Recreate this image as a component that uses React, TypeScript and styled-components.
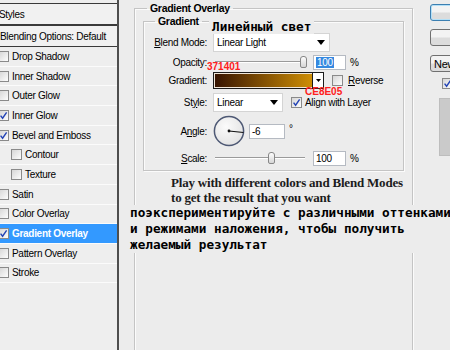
import styled, { createGlobalStyle, css } from "styled-components";

const GlobalStyle = createGlobalStyle`
  html, body {
    margin: 0;
    padding: 0;
    background: #ececec;
    overflow: hidden;
  }
  body {
    font-family: "Liberation Sans", Arial, sans-serif;
    font-size: 10px;
    letter-spacing: -0.3px;
    color: #000;
  }
`;

type StyleItem = {
  label: string;
  checked?: boolean;
  nested?: boolean;
  active?: boolean;
};

const STYLES: StyleItem[] = [
  { label: "Drop Shadow" },
  { label: "Inner Shadow" },
  { label: "Outer Glow" },
  { label: "Inner Glow", checked: true },
  { label: "Bevel and Emboss", checked: true },
  { label: "Contour", nested: true },
  { label: "Texture", nested: true },
  { label: "Satin" },
  { label: "Color Overlay" },
  { label: "Gradient Overlay", checked: true, active: true },
  { label: "Pattern Overlay" },
  { label: "Stroke" },
];

const NOTES = [
  { text: "Линейный свет", x: 209, y: 19, kind: "ru" as const },
  { text: "371401", x: 207, y: 61, kind: "hex" as const },
  { text: "CE8E05", x: 305, y: 86, kind: "hex" as const },
];

export default function App() {
  return (
    <>
      <GlobalStyle />
      <Dialog>
        <StylesPanel>
          <HeaderCell $top={3}>
            <span style={{ marginLeft: -1 }}>Styles</span>
          </HeaderCell>
          <HeaderCell>Blending Options: Default</HeaderCell>
          {STYLES.map((s) => (
            <StyleRow key={s.label} $active={s.active} $nested={s.nested}>
              <CheckBox checked={s.checked} ml={s.nested ? 0 : -2} />
              <span>{s.label}</span>
            </StyleRow>
          ))}
        </StylesPanel>

        <Workspace>
          <Group $pad={8} $h={400}>
            <Caption $ml={4}>Gradient Overlay</Caption>
            <Group $pad={6} $bottom={2}>
              <Caption $ml={5}>Gradient</Caption>
              <Form>
                <Field $h={21}>
                  <FieldLabel>
                    <u>B</u>lend Mode:
                  </FieldLabel>
                  <Select $w={117}>
                    <span>Linear Light</span>
                    <Caret />
                  </Select>
                </Field>
                <Field $h={18}>
                  <FieldLabel>Opacity:</FieldLabel>
                  <Slider>
                    <Thumb $at={87} />
                  </Slider>
                  <NumberBox $w={33} $ml={5}>
                    <Selected>100</Selected>
                  </NumberBox>
                  <Unit>%</Unit>
                </Field>
                <Field $h={19}>
                  <FieldLabel>Gradient:</FieldLabel>
                  <GradientPicker>
                    <Ramp />
                    <RampArrow>
                      <svg width="5" height="3" viewBox="0 0 5 3">
                        <path d="M0 0h5L2.5 3z" fill="#000" />
                      </svg>
                    </RampArrow>
                  </GradientPicker>
                  <CheckItem $ml={8} $gap={5}>
                    <CheckBox />
                    <span>
                      <u>R</u>everse
                    </span>
                  </CheckItem>
                </Field>
                <Field $h={24}>
                  <FieldLabel>
                    St<u>y</u>le:
                  </FieldLabel>
                  <Select $w={70}>
                    <span>Linear</span>
                    <Caret />
                  </Select>
                  <CheckItem $ml={8} $gap={3}>
                    <CheckBox checked />
                    <span>Align with Layer</span>
                  </CheckItem>
                </Field>
                <Field $h={34}>
                  <FieldLabel>
                    A<u>n</u>gle:
                  </FieldLabel>
                  <Dial />
                  <NumberBox $w={36} $ml={4}>
                    -6
                  </NumberBox>
                  <Unit $raise>°</Unit>
                </Field>
                <Field $h={20}>
                  <FieldLabel>
                    <u>S</u>cale:
                  </FieldLabel>
                  <Slider>
                    <Thumb $at={55} />
                  </Slider>
                  <NumberBox $w={33} $ml={5}>
                    100
                  </NumberBox>
                  <Unit>%</Unit>
                </Field>
              </Form>
            </Group>
            <Hint>
              Play with different colors and Blend Modes
              <br />
              to get the result that you want
            </Hint>
            <Translation>
              поэкспериментируйте с различными оттенками
              <br />
              и режимами наложения, чтобы получить
              <br />
              желаемый результат
            </Translation>
          </Group>
        </Workspace>

        <Actions>
          <Button $primary>OK</Button>
          <Button $mt={8}>Cancel</Button>
          <Button $mt={9} $start>
            New Style...
          </Button>
          <PreviewToggle>
            <CheckBox checked />
            <span>Preview</span>
          </PreviewToggle>
          <PreviewSwatch />
        </Actions>

        {NOTES.map((n) => (
          <Note key={n.text} $x={n.x} $y={n.y} $kind={n.kind}>
            {n.text}
          </Note>
        ))}
      </Dialog>
    </>
  );
}

function CheckBox({ checked, ml }: { checked?: boolean; ml?: number }) {
  return (
    <Check $ml={ml}>
      {checked && (
        <svg width="9" height="9" viewBox="0 0 9 9">
          <path
            d="M1.6 4.6 L3.6 7.2 L7.6 1.4"
            fill="none"
            stroke="#2343b5"
            strokeWidth="1.4"
          />
        </svg>
      )}
    </Check>
  );
}

function Caret() {
  return (
    <svg width="8" height="5" viewBox="0 0 8 5">
      <path d="M0 0h8L4 5z" fill="#000" />
    </svg>
  );
}

function Dial() {
  // -6 degrees: pointing right, slightly below horizontal
  const a = (6 * Math.PI) / 180;
  return (
    <DialFace width="32" height="32" viewBox="0 0 32 32">
      <defs>
        <radialGradient id="dialFill" cx="40%" cy="35%" r="70%">
          <stop offset="0" stopColor="#fbfbfb" />
          <stop offset="1" stopColor="#e2e2e2" />
        </radialGradient>
      </defs>
      <circle cx="16" cy="16" r="14.6" fill="url(#dialFill)" stroke="#4d5874" strokeWidth="1.5" />
      <line
        x1="16"
        y1="16"
        x2={16 + 14.6 * Math.cos(a)}
        y2={16 + 14.6 * Math.sin(a)}
        stroke="#111"
        strokeWidth="1.2"
      />
      <circle cx="16" cy="16" r="1.4" fill="#111" />
    </DialFace>
  );
}

const Dialog = styled.div`
  position: relative;
  display: flex;
  align-items: flex-start;
  width: 540px;
  height: 350px;
  overflow: hidden;
  background: #ececec;
`;

const StylesPanel = styled.div`
  flex: none;
  width: 117px;
  height: 100%;
  border-right: 2px solid #4e4e4e;
  background: #eeeeee;
`;

const HeaderCell = styled.div<{ $top?: number }>`
  display: flex;
  align-items: center;
  height: 20px;
  margin-top: ${(p) => p.$top ?? 0}px;
  border-top: 1px solid #3a3a3a;
  border-bottom: 1px solid #3a3a3a;
  background: #f1f1f1;
  white-space: nowrap;
`;

const StyleRow = styled.div<{ $active?: boolean; $nested?: boolean }>`
  display: flex;
  align-items: center;
  gap: 3px;
  height: 18.7px;
  padding-left: ${(p) => (p.$nested ? 11 : 0)}px;
  border-bottom: 1px solid #fbfbfb;
  white-space: nowrap;
  background: ${(p) => (p.$active ? "#3399ff" : "transparent")};
  color: ${(p) => (p.$active ? "#fff" : "#000")};
  font-weight: ${(p) => (p.$active ? "bold" : "normal")};
`;

const Check = styled.span<{ $ml?: number }>`
  flex: none;
  display: inline-flex;
  align-items: center;
  justify-content: center;
  width: 9px;
  height: 9px;
  margin-left: ${(p) => p.$ml ?? 0}px;
  border: 1px solid #8a8a8a;
  background: linear-gradient(135deg, #d6d6d6, #fdfdfd);
`;

const Workspace = styled.div`
  flex: none;
  width: 279px;
  margin-left: 15px;
  padding-top: 2px;
`;

const Group = styled.fieldset<{ $pad: number; $bottom?: number; $h?: number }>`
  margin: 0;
  min-width: 0;
  padding: 0 ${(p) => p.$pad}px ${(p) => p.$bottom ?? 0}px;
  border: 1px solid #c4c4c4;
  box-shadow: inset 1px 1px 0 #fbfbfb, 1px 1px 0 #fbfbfb;
  ${(p) =>
    p.$h &&
    css`
      height: ${p.$h}px;
    `}
`;

const Caption = styled.legend<{ $ml: number }>`
  margin-left: ${(p) => p.$ml}px;
  padding: 0 3px;
  font-weight: bold;
  font-size: 10.5px;
  line-height: 13px;
`;

const Form = styled.div`
  display: flex;
  flex-direction: column;
  padding-top: 4px;
`;

const Field = styled.div<{ $h: number }>`
  display: flex;
  align-items: center;
  height: ${(p) => p.$h}px;
  white-space: nowrap;
`;

const FieldLabel = styled.span`
  flex: none;
  width: 57px;
  margin-right: 6px;
  text-align: right;
`;

const Select = styled.div<{ $w: number }>`
  flex: none;
  box-sizing: border-box;
  display: flex;
  align-items: center;
  justify-content: space-between;
  width: ${(p) => p.$w}px;
  height: 19px;
  padding: 0 4px 0 3px;
  background: #fff;
  border: 1px solid #d4d4d4;
`;

const Slider = styled.div`
  flex: none;
  position: relative;
  width: 95px;
  height: 12px;

  &::before {
    content: "";
    position: absolute;
    left: 2px;
    right: 3px;
    top: 5px;
    height: 1px;
    background: #9a9a9a;
    box-shadow: 0 1px 0 #fff;
  }
`;

const Thumb = styled.span<{ $at: number }>`
  position: absolute;
  top: 0;
  left: ${(p) => p.$at}px;
  width: 5px;
  height: 10px;
  border: 1px solid #878787;
  border-radius: 3px 3px 2px 2px;
  background: linear-gradient(#fdfdfd, #d6d6d6);
`;

const NumberBox = styled.div<{ $w: number; $ml: number }>`
  flex: none;
  box-sizing: border-box;
  display: flex;
  align-items: center;
  width: ${(p) => p.$w}px;
  height: 15px;
  margin-left: ${(p) => p.$ml}px;
  padding: 0 2px;
  background: #fff;
  border: 1px solid #b5bac2;
`;

const Selected = styled.span`
  padding: 0 1px;
  line-height: 11px;
  background: #3588e0;
  color: #fff;
`;

const Unit = styled.span<{ $raise?: boolean }>`
  margin-left: 4px;
  ${(p) =>
    p.$raise &&
    css`
      margin-bottom: 6px;
    `}
`;

const GradientPicker = styled.div`
  flex: none;
  display: flex;
  width: 111px;
  height: 17px;
  box-sizing: border-box;
  border: 1px solid #1c1c1c;
`;

const Ramp = styled.div`
  flex: 1;
  border: 1px solid #f0e6d8;
  border-right: none;
  background: linear-gradient(to right, #371401, #ce8e05);
`;

const RampArrow = styled.div`
  display: flex;
  align-items: center;
  justify-content: center;
  width: 10px;
  border-left: 1px solid #1c1c1c;
  background: #fff;
`;

const CheckItem = styled.label<{ $ml: number; $gap: number }>`
  display: flex;
  align-items: center;
  gap: ${(p) => p.$gap}px;
  margin-left: ${(p) => p.$ml}px;
`;

const DialFace = styled.svg`
  flex: none;
  display: block;
`;

const Hint = styled.p`
  margin: 4px 0 0 28px;
  font-family: "Liberation Serif", "Times New Roman", serif;
  font-weight: bold;
  font-size: 13px;
  line-height: 15px;
  letter-spacing: -0.2px;
  color: #1c1c1c;
  white-space: nowrap;
`;

const Translation = styled.p`
  margin: 0 0 0 -13px;
  width: 320px;
  background: #ececec;
  font-family: "DejaVu Sans Mono", monospace;
  font-weight: bold;
  font-size: 12.7px;
  line-height: 16px;
  letter-spacing: 0;
  white-space: nowrap;
  color: #000;
`;

const Actions = styled.div`
  flex: none;
  display: flex;
  flex-direction: column;
  align-items: flex-start;
  width: 82px;
  margin-left: 17px;
  padding-top: 4px;
`;

const Button = styled.div<{ $primary?: boolean; $mt?: number; $start?: boolean }>`
  box-sizing: border-box;
  display: flex;
  align-items: center;
  justify-content: ${(p) => (p.$start ? "flex-start" : "center")};
  width: 80px;
  height: 17px;
  margin-top: ${(p) => p.$mt ?? 0}px;
  padding: 0 3px;
  border-radius: 3px;
  border: 1px solid ${(p) => (p.$primary ? "#3c7fb1" : "#707070")};
  background: linear-gradient(#f3f3f3 0 45%, #dcdcdc 55% 100%);
  font-size: 11px;
  white-space: nowrap;
  ${(p) =>
    p.$primary &&
    css`
      box-shadow: inset 0 0 0 1px #b4e0f7;
    `}
`;

const PreviewToggle = styled.label`
  display: flex;
  align-items: center;
  gap: 4px;
  margin: 6px 0 0 12px;
  white-space: nowrap;
`;

const PreviewSwatch = styled.div`
  width: 62px;
  height: 58px;
  margin: 9px 0 0 9px;
  box-sizing: border-box;
  background: #cacaca;
  border: 1px solid #bdbdbd;
`;

const Note = styled.span<{ $x: number; $y: number; $kind: "ru" | "hex" }>`
  position: absolute;
  left: ${(p) => p.$x}px;
  top: ${(p) => p.$y}px;
  white-space: nowrap;
  letter-spacing: 0;
  ${(p) =>
    p.$kind === "hex"
      ? css`
          font: bold 10px/11px "Liberation Sans", Arial, sans-serif;
          color: #ff2020;
        `
      : css`
          padding: 0 3px;
          background: #ececec;
          font: bold 12.7px/15px "DejaVu Sans Mono", monospace;
          color: #000;
        `}
`;
